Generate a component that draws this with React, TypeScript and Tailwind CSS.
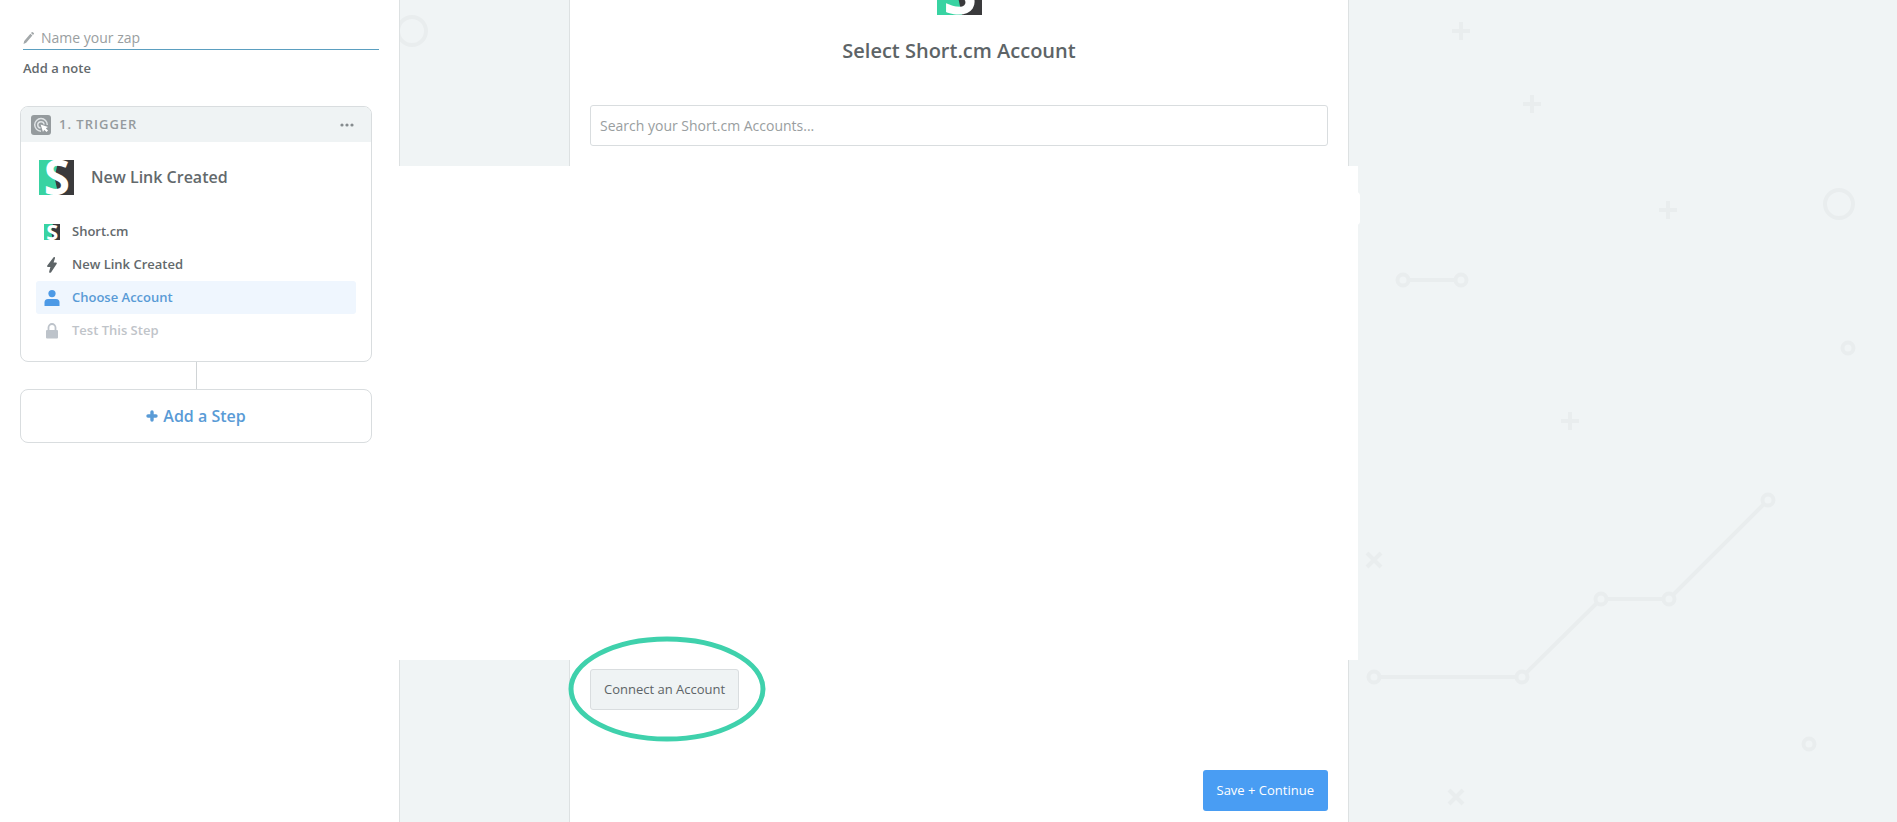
interface StepProps {
  icon: React.ReactNode;
  label: string;
  className?: string;
}

function Logo({ className }: { className: string }) {
  return (
    <svg
      viewBox="0 0 36 36"
      className={`overflow-visible ${className}`}
      role="img"
      aria-label="Short.cm"
    >
      <rect width="36" height="36" fill="#3a3a3c" />
      <path d="M0 0H20L16 18L20 36H0Z" fill="#38d3a2" />
      <text
        x="18.5"
        y="35.5"
        textAnchor="middle"
        fontSize="49"
        fontWeight="700"
        fill="#fff"
        className="font-['Noto_Sans',sans-serif]"
      >
        S
      </text>
    </svg>
  );
}

function Step({ icon, label, className = "text-[#63696c]" }: StepProps) {
  return (
    <li>
      <a
        href="#"
        className={`flex h-[33px] items-center gap-3 rounded-[3px] pl-2 text-[13px] font-semibold ${className}`}
      >
        <span className="flex w-4 justify-center">{icon}</span>
        {label}
      </a>
    </li>
  );
}

function TriggerIcon() {
  return (
    <svg viewBox="0 0 20 20" className="h-5 w-5">
      <rect width="20" height="20" rx="3" fill="#959b9e" />
      <g fill="none" stroke="#dfe3e5" strokeWidth="1.5">
        <path d="M10 16.2A6.3 6.3 0 1 1 16.3 10" />
        <path d="M9.5 13.1A3.2 3.2 0 1 1 13.1 9.5" />
      </g>
      <path d="M9.6 9.6L17 12L14.8 13.2L17 15.6L15.6 17L13.2 14.8L12 17Z" fill="#fff" />
    </svg>
  );
}

function Backdrop() {
  const pluses = [[1062, 31], [1133, 104], [1269, 210], [1171, 421]];
  const crosses = [[975, 560], [1057, 797]];
  const dots = [
    [1004, 280], [1062, 280], [1449, 348], [1410, 744],
    [975, 677], [1123, 677], [1202, 599], [1270, 599], [1369, 500],
  ];

  return (
    <svg
      className="absolute top-0 left-0 h-[822px] w-[1498px]"
      fill="none"
      stroke="#e9edee"
      strokeWidth="4"
      aria-hidden="true"
    >
      <circle cx="13" cy="31" r="14" />
      <circle cx="1440" cy="204" r="14" />
      <path d="M1004 280H1062M975 677H1123L1202 599H1270L1369 500" />
      {pluses.map(([x, y]) => (
        <path key={x} d={`M${x - 9} ${y}h18M${x} ${y - 9}v18`} />
      ))}
      {crosses.map(([x, y]) => (
        <path key={x} d={`M${x - 7} ${y - 7}l14 14M${x + 7} ${y - 7}l-14 14`} />
      ))}
      {dots.map(([x, y]) => (
        <circle key={`${x}-${y}`} cx={x} cy={y} r="5.5" fill="#f0f4f5" />
      ))}
    </svg>
  );
}

function Sidebar() {
  return (
    <aside className="w-[399px] shrink-0 pt-6 pr-[27px] pl-5">
      <div className="-mr-[7px] ml-[3px]">
        <label className="flex h-[26px] items-center gap-[6px] border-b border-[#5b9fc0] pt-[2px]">
          <svg viewBox="0 0 12 12" className="h-3 w-3 shrink-0" fill="#a3a8aa">
            <path d="M0.5 12L1.2 9L7.4 1.8L9.4 3.5L3.2 10.7ZM8 1.1L8.7 0.3Q9.2-0.2 9.8 0.2L10.8 1.1Q11.3 1.6 10.8 2.1L10 3Z" />
          </svg>
          <input
            type="text"
            aria-label="Name your zap"
            placeholder="Name your zap"
            className="w-full text-sm outline-none placeholder:text-[#999ea0]"
          />
        </label>
        <button type="button" className="mt-2 block h-[22px] text-[13px] font-semibold text-[#63696c]">
          Add a note
        </button>
      </div>

      <section className="mt-[26px] overflow-hidden rounded-lg border border-[#d9dddf]">
        <header className="flex h-[35px] items-center gap-2 bg-[#eff3f4] pr-[17px] pl-[10px] text-[#959b9e]">
          <TriggerIcon />
          <h2 className="grow text-[13px] font-semibold tracking-[1px]">1. TRIGGER</h2>
          <button type="button" aria-label="Step options">
            <svg viewBox="0 0 14 4" className="h-1 w-[14px]" fill="#858b8e">
              <circle cx="2" cy="2" r="1.6" />
              <circle cx="7" cy="2" r="1.6" />
              <circle cx="12" cy="2" r="1.6" />
            </svg>
          </button>
        </header>
        <div className="px-[15px] pt-[18px] pb-[14px]">
          <div className="mb-5 ml-[3px] flex gap-[17px]">
            <Logo className="h-[35px] w-[35px]" />
            <h3 className="text-base leading-[34px] font-semibold text-[#63696c]">New Link Created</h3>
          </div>
          <ul>
            <Step icon={<Logo className="h-4 w-4" />} label="Short.cm" />
            <Step
              icon={
                <svg viewBox="0 0 10 16" className="h-4 w-[10px]" fill="#5d6467">
                  <path d="M6.6 0.2Q8.6-0.3 7.9 1.6L6.6 5.5H9Q10.3 5.7 9.6 6.9L4 15.4Q2 16.6 2.2 14.6L3.4 10H1Q-0.4 9.8 0.3 8.5Z" />
                </svg>
              }
              label="New Link Created"
            />
            <Step
              className="bg-[#eff6fe] text-[#599bd6]"
              icon={
                <svg viewBox="0 0 16 16" className="h-4 w-4" fill="#4d9ae6">
                  <circle cx="8" cy="3.6" r="3.6" />
                  <path d="M0.5 16V12.5Q0.5 9 4 9H12Q15.5 9 15.5 12.5V16Z" />
                </svg>
              }
              label="Choose Account"
            />
            <Step
              className="text-[#bfc4c9]"
              icon={
                <svg viewBox="0 0 12 16" className="h-4 w-3">
                  <path d="M2.5 8V4.5a3.5 3.5 0 0 1 7 0V8" fill="none" stroke="#bdc3ca" strokeWidth="1.8" />
                  <rect y="7" width="12" height="8.5" rx="1" fill="#bdc3ca" />
                </svg>
              }
              label="Test This Step"
            />
          </ul>
        </div>
      </section>

      <div className="mx-auto h-[27px] w-px bg-[#d0d4d6]" />

      <button
        type="button"
        className="flex h-[54px] w-full items-center justify-center gap-[5px] rounded-lg border border-[#d9dddf] text-base font-semibold text-[#599bd6]"
      >
        <svg viewBox="0 0 12 12" className="h-3 w-3" stroke="#599bd6" strokeWidth="3.4" strokeLinecap="round">
          <path d="M6 2V10M2 6H10" />
        </svg>
        Add a Step
      </button>
    </aside>
  );
}

export default function App() {
  return (
    <div className="flex min-h-screen overflow-hidden bg-white font-['Open_Sans',sans-serif] text-[#5d6467]">
      <Sidebar />
      <main className="relative flex grow flex-col overflow-hidden bg-[#f0f4f5]">
        <Backdrop />

        <div className="relative flex h-[166px] border-l border-[#dde1e2] pl-[169px]">
          <section className="w-full max-w-[780px] border-x border-[#dde1e2] bg-white px-5">
            <div className="flex h-[15px] items-end justify-center">
              <Logo className="h-[45px] w-[45px] shrink-0" />
            </div>
            <h1 className="mt-[22px] text-center text-xl font-semibold">Select Short.cm Account</h1>
            <input
              type="search"
              aria-label="Search your Short.cm Accounts"
              placeholder="Search your Short.cm Accounts..."
              className="mt-10 h-[41px] w-full rounded-[3px] border border-[#d9dddf] px-[9px] text-sm outline-none placeholder:text-[#999ea0]"
            />
          </section>
        </div>

        {/* empty account list */}
        <div className="relative h-[494px] w-full max-w-[959px] bg-white">
          <span className="absolute top-[26px] -right-[2px] h-[33px] w-1 rounded-r-full bg-white" />
        </div>

        <div className="relative flex grow border-l border-[#dde1e2] pl-[169px]">
          <section className="flex w-full max-w-[780px] flex-col items-start border-x border-[#dde1e2] bg-white px-5 pt-[9px] pb-[11px]">
            <div className="relative">
              <button
                type="button"
                className="h-[41px] rounded-[3px] border border-[#d9dddf] bg-[#eff3f4] px-[13px] text-[13px]"
              >
                Connect an Account
              </button>
              <svg
                className="pointer-events-none absolute -top-[33px] -left-[22px] h-[106px] w-[198px]"
                fill="none"
                stroke="#3fd1ac"
                strokeWidth="5"
                aria-hidden="true"
              >
                <ellipse cx="99" cy="53" rx="96" ry="50" />
              </svg>
            </div>
            <button
              type="submit"
              className="mt-[60px] h-[41px] self-end rounded-[3px] bg-[#499df3] px-[14px] text-[13px] text-white"
            >
              Save + Continue
            </button>
          </section>
        </div>
      </main>
    </div>
  );
}
